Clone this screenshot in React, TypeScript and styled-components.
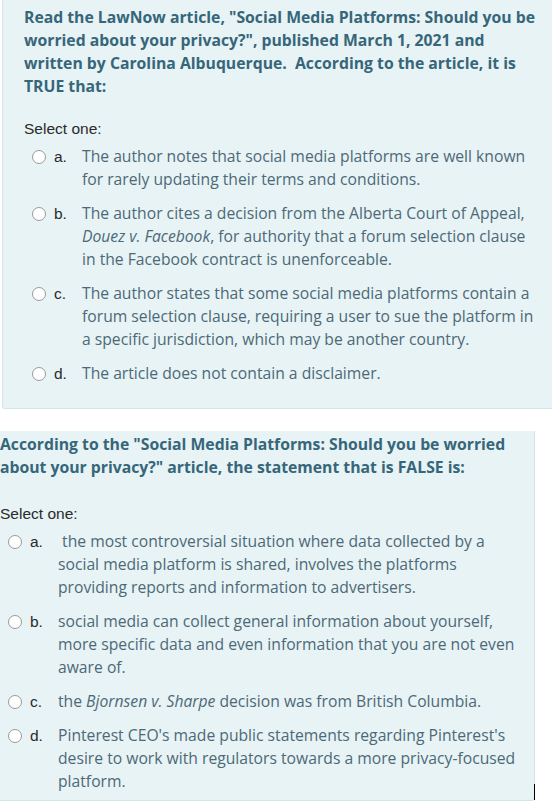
import React from "react";
import styled, { createGlobalStyle } from "styled-components";

const Global = createGlobalStyle`
  html, body { margin: 0; padding: 0; background: #ffffff; }
  body { width: 552px; height: 802px; overflow: hidden; }
`;

const Page = styled.div`
  display: flex;
  flex-direction: column;
  align-items: flex-start;
  gap: 22px;
  width: 552px;
`;

const Panel = styled.section<{ $shift: number; $width: number; $pt: number; $pb: number; $pr: number }>`
  box-sizing: border-box;
  flex: none;
  margin-left: ${(p) => p.$shift}px;
  width: ${(p) => p.$width}px;
  background: #e7f3f5;
  border: 1px solid #d4e5e8;
  border-top: none;
  border-radius: 0 0 3px 3px;
  padding: ${(p) => p.$pt}px ${(p) => p.$pr}px ${(p) => p.$pb}px 21px;
  position: relative;
`;

const QText = styled.div`
  font-family: "Open Sans", sans-serif;
  font-weight: 700;
  font-size: 15.75px;
  line-height: 23px;
  color: #36667a;
`;

const Prompt = styled.div<{ $mt: number }>`
  font-family: "Liberation Sans", Arial, sans-serif;
  font-size: 15.5px;
  line-height: 20px;
  color: #2a2a2a;
  margin-top: ${(p) => p.$mt}px;
  margin-bottom: 6px;
`;

const Options = styled.div<{ $gap: number }>`
  display: flex;
  flex-direction: column;
  gap: ${(p) => p.$gap}px;
`;

const Option = styled.label`
  display: grid;
  grid-template-columns: 14px 20px 1fr;
  column-gap: 8px;
  margin-left: 8px;
  align-items: start;
`;

const Radio = styled.span`
  box-sizing: border-box;
  width: 14px;
  height: 14px;
  margin-top: 5px;
  border-radius: 50%;
  border: 1px solid #9a9a9a;
  background: #fff;
`;

const Letter = styled.span`
  font-family: "Liberation Sans", Arial, sans-serif;
  font-size: 15.5px;
  line-height: 23px;
  color: #2a2a2a;
`;

const Answer = styled.span`
  font-family: "Open Sans", sans-serif;
  font-size: 15.7px;
  line-height: 23px;
  color: #4d6977;
  em { font-style: italic; }
`;

const Caret = styled.span`
  position: absolute;
  right: -1px;
  bottom: 0px;
  width: 1px;
  height: 16px;
  background: #000;
`;

type Opt = { l: string; t: React.ReactNode };

const q1: Opt[] = [
  { l: "a.", t: "The author notes that social media platforms are well known for rarely updating their terms and conditions." },
  { l: "b.", t: <>The author cites a decision from the Alberta Court of Appeal, <em>Douez v. Facebook</em>, for authority that a forum selection clause in the Facebook contract is unenforceable.</> },
  { l: "c.", t: "The author states that some social media platforms contain a forum selection clause, requiring a user to sue the platform in a specific jurisdiction, which may be another country." },
  { l: "d.", t: "The article does not contain a disclaimer." },
];

const q2: Opt[] = [
  { l: "a.", t: "\u00a0the most controversial situation where data collected by a social media platform is shared, involves the platforms providing reports and information to advertisers." },
  { l: "b.", t: "social media can collect general information about yourself, more specific data and even information that you are not even aware of." },
  { l: "c.", t: <>the <em>Bjornsen v. Sharpe</em> decision was from British Columbia.</> },
  { l: "d.", t: "Pinterest CEO's made public statements regarding Pinterest's desire to work with regulators towards a more privacy-focused platform." },
];

const OptList = ({ items, gap }: { items: Opt[]; gap: number }) => (
  <Options $gap={gap}>
    {items.map((o) => (
      <Option key={o.l}>
        <Radio />
        <Letter>{o.l}</Letter>
        <Answer>{o.t}</Answer>
      </Option>
    ))}
  </Options>
);

export default function App() {
  return (
    <>
      <Global />
      <Page>
        <Panel $shift={2} $width={552} $pt={6} $pb={23} $pr={12}>
          <QText>
            Read the LawNow article, "Social Media Platforms: Should you be worried about your privacy?", published March 1, 2021 and written by Carolina Albuquerque.&nbsp; According to the article, it is TRUE that:
          </QText>
          <Prompt $mt={21}>Select one:</Prompt>
          <OptList items={q1} gap={11} />
        </Panel>
        <Panel $shift={-22} $width={557} $pt={2} $pb={7} $pr={10}>
          <QText>
            According to the "Social Media Platforms: Should you be worried about your privacy?" article, the statement that is FALSE is:
          </QText>
          <Prompt $mt={25}>Select one:</Prompt>
          <OptList items={q2} gap={11} />
          <Caret />
        </Panel>
      </Page>
    </>
  );
}
